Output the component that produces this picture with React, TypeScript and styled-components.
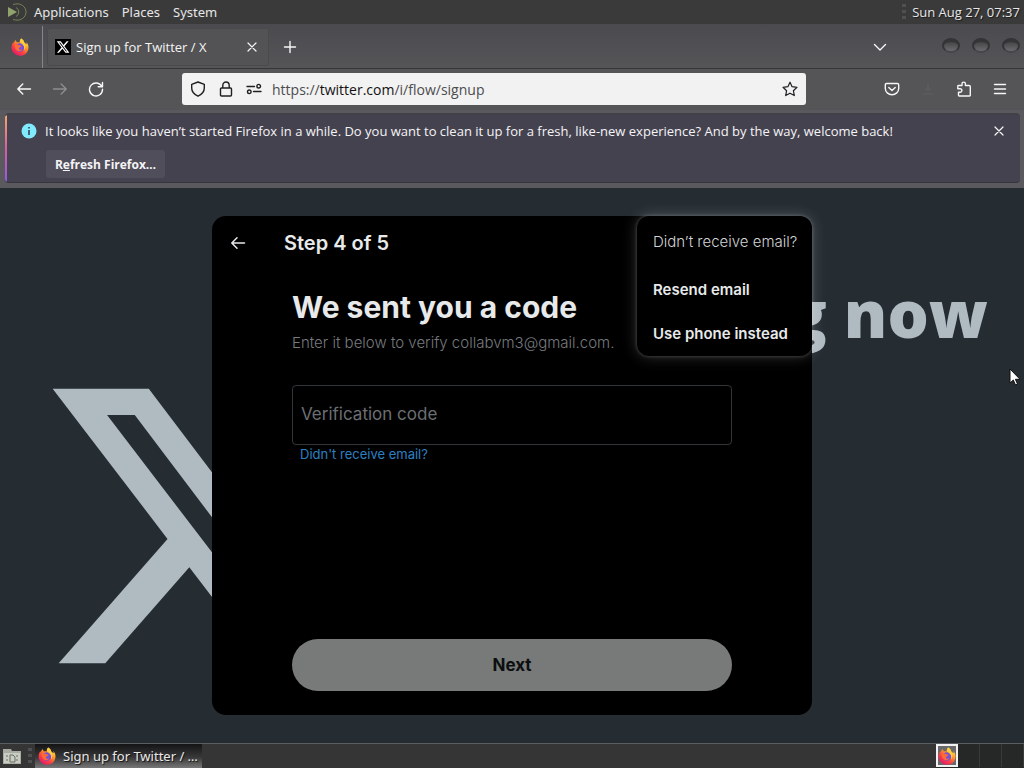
import React from "react";
import styled, { createGlobalStyle, css } from "styled-components";

const UI_FONT = '"Open Sans", "Noto Sans", sans-serif';
const PANEL_FONT = '"Noto Sans", "Open Sans", sans-serif';
const SITE_FONT = 'Inter, "Liberation Sans", sans-serif';

const GlobalStyle = createGlobalStyle`
  * { box-sizing: border-box; }
  body { margin: 0; font-family: ${UI_FONT}; background: #252d33; }
  button, input { font: inherit; color: inherit; margin: 0; padding: 0; border: 0; background: none; }
  h1, h2, p { margin: 0; padding: 0; }
  a { color: inherit; text-decoration: none; }
`;

const Desktop = styled.div`
  display: flex;
  flex-direction: column;
  min-height: 100vh;
  overflow: hidden;
`;

/* Desktop panel */
const TopPanel = styled.header`
  display: flex;
  align-items: center;
  height: 24px;
  padding: 0 4px 0 7px;
  background: #3a3a3b;
  color: #e6e6e6;
  font-family: ${PANEL_FONT};
  font-size: 13px;
  text-shadow: 1px 1px 1px #1b1b1b;
`;
const PanelMenu = styled.nav`
  display: flex;
  align-items: center;
  flex: 1;
  gap: 13px;
`;
const PanelButton = styled.button`
  line-height: 24px;
`;
const BrandButton = styled(PanelButton)`
  display: flex;
  gap: 7px;
  align-items: center;
`;
const Clock = styled.time`
  margin-left: 6px;
  font-family: ${UI_FONT};
`;

/* Browser chrome */
const TabStrip = styled.div`
  display: flex;
  align-items: center;
  height: 45px;
  padding: 2px 4px 0 0;
  border-bottom: 1px solid #353538;
  background: linear-gradient(#4b4b4f, #555558);
  color: #f4f4f4;
`;
const PinnedTab = styled.button`
  display: flex;
  align-items: center;
  justify-content: center;
  width: 43px;
  height: 42px;
  padding-right: 3px;
  border-right: 1px solid #85858a;
`;
const Tab = styled.div`
  display: flex;
  align-items: center;
  width: 222px;
  height: 38px;
  margin-left: 4px;
  padding: 0 8px 0 7px;
  gap: 5px;
  border-radius: 3px;
  border: 1px solid #4a4a4d;
  background: #535356;
  font-size: 13px;
`;
const TabTitle = styled.span`
  flex: 1;
  white-space: nowrap;
`;
const IconButton = styled.button<{ $w?: number; $dim?: boolean }>`
  display: flex;
  align-items: center;
  justify-content: center;
  width: ${(p) => p.$w ?? 36}px;
  height: 32px;
  flex: none;
  color: #f6f6f6;
  opacity: ${(p) => (p.$dim ? 0.35 : 1)};
`;
const Spacer = styled.div`
  flex: 1;
`;
const WindowButtons = styled.div`
  display: flex;
  gap: 12px;
  margin-left: 44px;
`;
const WindowButton = styled.button`
  width: 18px;
  height: 15px;
  flex: none;
  margin-bottom: 3px;
  border-radius: 50%;
  border: 2px solid #343437;
  border-top: 4px solid #343437;
  border-bottom-color: #47474a;
  background: linear-gradient(#444447, #6c6c6f);
`;
const Toolbar = styled.div`
  display: grid;
  grid-template-columns: 182px 1fr 218px;
  align-items: center;
  height: 41px;
  padding-bottom: 1px;
  background: #555557;
`;
const ToolGroup = styled.div<{ $end?: boolean }>`
  display: flex;
  padding: ${(p) => (p.$end ? "0 6px 0 0" : "0 0 0 6px")};
  justify-content: ${(p) => (p.$end ? "flex-end" : "flex-start")};
`;
const UrlBar = styled.div`
  display: flex;
  align-items: center;
  height: 32px;
  padding: 0 8px;
  border-radius: 3px;
  background: #f2f2f2;
  color: #202023;
  font-size: 14px;
`;
const UrlIcons = styled.div`
  display: flex;
  gap: 12px;
  margin-right: 10px;
`;
const Address = styled.a`
  flex: 1;
  color: #4c4c4f;
  strong { font-weight: 400; color: #111; }
`;

const NoticeWrap = styled.div`
  padding: 3px 4px 5px 5px;
  background: #5a5a5e;
`;
const Notice = styled.section`
  display: grid;
  grid-template-columns: 2px 1fr;
  min-height: 70px;
  border-radius: 4px;
  overflow: hidden;
  background: #45424f;
  border-top: 2px solid #424147;
  border-bottom: 1px solid #36343d;
  color: #f4f4f6;
  font-size: 13px;
`;
const NoticeStripe = styled.div`
  background: linear-gradient(#f5a56b, #d85fa0 50%, #9059e8);
`;
const NoticeContent = styled.div`
  padding: 0 4px 3px 14px;
`;
const NoticeLine = styled.div`
  display: flex;
  align-items: center;
  gap: 8px;
  height: 32px;
  white-space: nowrap;
`;
const NoticeText = styled.p`
  flex: 1;
  line-height: 20px;
`;
const NoticeButton = styled.button`
  height: 28px;
  width: 119px;
  margin: 3px 0 0 25px;
  border-radius: 3px;
  background: #504e5a;
  font-size: 12px;
  font-weight: 700;
`;

/* Site */
const Page = styled.main`
  position: relative;
  display: grid;
  flex: 1;
  min-height: 555px;
  background: #252d33;
  font-family: ${SITE_FONT};
  overflow: hidden;
`;
const Hero = styled.div`
  display: grid;
  grid-template-columns: 408px 1fr;
  color: #b0bac1;
`;
const HeroLogo = styled.div`
  padding: 169px 0 0 35px;
`;
const HeroTitle = styled.h1`
  display: flex;
  justify-content: flex-end;
  padding: 80px 36px 0 0;
  font-family: ${UI_FONT};
  font-size: 65px;
  line-height: 90px;
  font-weight: 800;
  white-space: nowrap;
`;
const Overlay = styled.div`
  position: absolute;
  inset: 0;
  display: flex;
  justify-content: center;
  padding: 28px 16px;
`;
const Dialog = styled.section`
  position: relative;
  display: flex;
  flex-direction: column;
  width: 100%;
  max-width: 600px;
  border-radius: 14px;
  background: #000;
  color: #e7e9ea;
`;
const DialogHeader = styled.div`
  display: flex;
  align-items: center;
  height: 53px;
  padding: 0 16px;
  gap: 36px;
`;
const BackButton = styled.button`
  display: flex;
  align-items: center;
  justify-content: center;
  width: 20px;
  height: 36px;
`;
const StepTitle = styled.h2`
  font-size: 20px;
  line-height: 24px;
  font-weight: 600;
`;
const Form = styled.form`
  display: flex;
  flex: 1;
  flex-direction: column;
  padding: 20px 80px 24px;
`;
const Heading = styled.h2`
  font-size: 30px;
  line-height: 36px;
  font-weight: 700;
`;
const Hint = styled.p`
  margin-top: 8px;
  color: #777b7f;
  font-size: 15px;
  line-height: 20px;
  font-weight: 300;
`;
const CodeInput = styled.input`
  width: 100%;
  height: 60px;
  margin-top: 32px;
  padding: 0 8px 2px;
  border: 1px solid #333639;
  border-radius: 4px;
  font-size: 17px;
  &::placeholder { color: #6b6f73; opacity: 1; }
`;
const ResendLink = styled.a`
  align-self: flex-start;
  margin-left: 8px;
  color: #2b80c4;
  font-size: 13px;
  line-height: 19px;
`;
const NextButton = styled.button`
  height: 52px;
  margin-top: auto;
  border-radius: 26px;
  background: #787a79;
  color: #0c0f10;
  font-size: 17px;
  font-weight: 700;
`;
const Menu = styled.div`
  position: absolute;
  top: 0;
  right: 0;
  width: 175px;
  height: 140px;
  padding: 4px 0;
  border-radius: 12px;
  background: #000;
  box-shadow: 0 0 15px rgba(255, 255, 255, 0.2), 0 0 3px 1px rgba(255, 255, 255, 0.15);
  font-size: 15px;
  line-height: 20px;
  white-space: nowrap;
`;
const menuLine = css`
  display: block;
  padding: 12px 16px;
  text-align: left;
`;
const MenuLabel = styled.p`
  ${menuLine}
  height: 48px;
  color: #d2d4d5;
  font-weight: 300;
`;
const MenuItem = styled.button`
  ${menuLine}
  width: 100%;
  font-weight: 600;
`;
const Pointer = styled.svg`
  position: absolute;
  top: 180px;
  right: 3px;
`;

/* Bottom panel */
const BottomPanel = styled.footer`
  display: flex;
  align-items: center;
  height: 25px;
  padding-left: 2px;
  border-top: 1px solid #5a5e60;
  background: #353535;
  color: #e8e8e8;
  font-family: ${PANEL_FONT};
  font-size: 13px;
`;
const TaskButton = styled.button`
  display: flex;
  align-items: center;
  gap: 7px;
  width: 167px;
  height: 24px;
  margin-left: 3px;
  padding: 0 3px;
  background: linear-gradient(#141415, #38383a 55%, #777);
  text-shadow: 1px 1px 1px #111;
  white-space: nowrap;
`;
const PanelIcon = styled.button`
  display: flex;
  margin-right: 6px;
`;
const Workspaces = styled.div`
  display: grid;
  grid-template-columns: repeat(4, 22px);
  height: 24px;
  background: #262727;
`;
const Workspace = styled.button<{ $active?: boolean }>`
  display: flex;
  align-items: center;
  justify-content: center;
  height: 23px;
  border-right: 1px solid #393a3a;
  ${(p) =>
    p.$active &&
    css`
      border: 2px solid #f2f2f2;
      background: #69696c;
    `}
`;

type IconProps = { size?: number };

const Firefox = ({ size = 16 }: IconProps) => (
  <svg width={size} height={size} viewBox="0 0 32 32" aria-hidden="true">
    <defs>
      <linearGradient id="foxBody" x1="0.85" y1="0.05" x2="0.2" y2="0.95">
        <stop offset="0" stopColor="#fff04a" />
        <stop offset="0.35" stopColor="#ff9a2b" />
        <stop offset="0.65" stopColor="#fb453f" />
        <stop offset="1" stopColor="#e3166f" />
      </linearGradient>
    </defs>
    <path
      d="M18 1c4 2 5 5 5.500 7 3 2 4 4 4.500 2-.3-1.500-.8-2.500-1.200-3C30 9 31.500 14 31 18c-.8 8-7 13.500-15 13.500S1 25 1 17.500C1 13 2.500 10 4.200 7.200 4 8 4.100 9 4.300 9.500 6 7 7 5 7.500 3.500 9 5 10 6.500 10.500 8c2-.5 4-.3 5 .5C15 5 16.500 3 18 1z"
      fill="url(#foxBody)"
    />
    <circle cx="16" cy="17" r="7.500" fill="#7651d8" />
    <path d="M6 13c2-2 6-2 9 0 2 .5 4 0 3.500 1.500-1 2-3.500 1.500-4.500 3.500-.5 2 2 4 6 2-2 5-10 4.500-12-1C7 17 6.500 15 6 13z" fill="#ff6c34" />
    <path d="M18 1c4 2 5 5 5.500 7 3 4 3.500 10-.5 14 2-6-1-10-5-12.500C15.500 7 16 3.500 18 1z" fill="#ffce3c" />
  </svg>
);

const X_PATH =
  "M18.244 2.25h3.308l-7.227 8.26 8.502 11.24H16.17l-5.214-6.817L4.99 21.75H1.68l7.73-8.835L1.254 2.25H8.08l4.713 6.231zm-1.161 17.52h1.833L7.084 4.126H5.117z";

const XLogo = ({ size = 16 }: IconProps) => (
  <svg width={size} height={size} viewBox="0 0 24 24" fill="currentColor" aria-hidden="true">
    <path d={X_PATH} />
  </svg>
);
const XFavicon = () => (
  <svg width="16" height="16" viewBox="0 0 24 24" aria-hidden="true">
    <path d="M0 0h24v24H0z" fill="#000" />
    <path d={X_PATH} fill="#fff" transform="translate(1.500 1.500) scale(.88)" />
  </svg>
);

const Line = ({ d, size = 16, w = 1.4 }: { d: string; size?: number; w?: number }) => (
  <svg
    width={size}
    height={size}
    viewBox="0 0 16 16"
    fill="none"
    stroke="currentColor"
    strokeWidth={w}
    strokeLinecap="round"
    strokeLinejoin="round"
    aria-hidden="true"
  >
    <path d={d} />
  </svg>
);

const CLOSE = "M4 4l8 8M12 4l-8 8";
const BACK = "M14.500 8H1.800M6.800 3L1.800 8l5 5";
const FORWARD = "M1.500 8h12.700M9.200 3l5 5-5 5";
const RELOAD = "M13.800 5.500A6.500 6.500 0 1 0 14.500 8.300M14.500 1.500v4.300h-4.300";
const SHIELD = "M8 1L14.300 3.300V7c0 4-2.600 6.500-6.300 8.200C4.300 13.500 1.700 11 1.700 7V3.300z";
const LOCK = "M3.500 7h9c.6 0 1 .4 1 1v6c0 .6-.4 1-1 1h-9c-.6 0-1-.4-1-1V8c0-.6.4-1 1-1zM4.800 7V4.200a3.200 3.200 0 0 1 6.400 0V7";
const SLIDERS = "M1 5.500h7.500M14.500 5.200a1.800 1.800 0 1 0-3.600 0 1.800 1.800 0 0 0 3.600 0M7.500 10.500H15M1.500 10.800a1.800 1.800 0 1 0 3.600 0 1.800 1.800 0 0 0-3.600 0";
const STAR = "M8 1.200l2.100 4.500 4.900.6-3.600 3.400.9 4.900L8 12.200l-4.300 2.400.9-4.900L1 6.300l4.900-.6z";
const POCKET = "M2.500 2.500h11c.7 0 1.200.5 1.200 1.200V7.500a6.700 6.200 0 0 1-13.400 0V3.700c0-.7.500-1.200 1.200-1.200zM4.800 6.500L8 9.600l3.200-3.100";
const PUZZLE = "M2.500 4.500H6V2.800a1.700 1.700 0 0 1 3.400 0v1.700h3.700c.7 0 1.200.5 1.200 1.200v8.600c0 .4-.3.700-.7.700H3.200c-.4 0-.7-.3-.7-.7v-3.100h1.700a1.700 1.700 0 0 0 0-3.400H1.800V5.200c0-.4.3-.7.7-.7z";
const DOWNLOAD = "M8 2v7M5.500 7L8 9.500 10.500 7M3 13h10";

const Grip = () => (
  <svg width="4" height="16" viewBox="0 0 4 16" fill="#505052" aria-hidden="true">
    <path d="M0 0h4v3H0zM0 6h4v3H0zM0 12h4v3H0z" />
  </svg>
);

export default function App() {
  return (
    <Desktop>
      <GlobalStyle />
      <TopPanel>
        <PanelMenu aria-label="Desktop">
          <BrandButton>
            <svg width="20" height="18" viewBox="0 0 20 18" fill="none" aria-hidden="true">
              <path d="M1 4l9 5-9 5z" fill="#91a36c" />
              <path d="M6 1.500C14-1 19 4 19 9s-5 10-13 7.500" stroke="#748456" />
              <path d="M9 4.500a5 5 0 0 1 0 9" stroke="#748456" />
            </svg>
            Applications
          </BrandButton>
          <PanelButton>Places</PanelButton>
          <PanelButton>System</PanelButton>
        </PanelMenu>
        <Grip />
        <Clock>Sun Aug 27, 07:37</Clock>
      </TopPanel>

      <TabStrip>
        <PinnedTab aria-label="Firefox View">
          <Firefox size={18} />
        </PinnedTab>
        <Tab>
          <XFavicon />
          <TabTitle>Sign up for Twitter / X</TabTitle>
          <IconButton $w={16} aria-label="Close tab">
            <Line d={CLOSE} w={1.2} />
          </IconButton>
        </Tab>
        <IconButton $w={42} aria-label="New tab">
          <Line d="M8 2.500v11M2.500 8h11" />
        </IconButton>
        <Spacer />
        <IconButton $w={36} aria-label="List all tabs">
          <Line d="M2.500 5.500L8 11l5.500-5.500" />
        </IconButton>
        <WindowButtons>
          <WindowButton aria-label="Minimize" />
          <WindowButton aria-label="Maximize" />
          <WindowButton aria-label="Close" />
        </WindowButtons>
      </TabStrip>

      <Toolbar>
        <ToolGroup>
          <IconButton aria-label="Back"><Line d={BACK} /></IconButton>
          <IconButton $dim aria-label="Forward"><Line d={FORWARD} /></IconButton>
          <IconButton aria-label="Reload"><Line d={RELOAD} /></IconButton>
        </ToolGroup>
        <UrlBar>
          <UrlIcons>
            <Line d={SHIELD} />
            <Line d={LOCK} />
            <Line d={SLIDERS} />
          </UrlIcons>
          <Address href="#">
            https://<strong>twitter.com</strong>/i/flow/signup
          </Address>
          <Line d={STAR} w={1.2} />
        </UrlBar>
        <ToolGroup $end>
          <IconButton aria-label="Save to Pocket"><Line d={POCKET} /></IconButton>
          <IconButton $dim aria-label="Downloads">
            <svg width="16" height="16" viewBox="0 0 16 16" fill="none" stroke="#77777a" aria-hidden="true">
              <path d={DOWNLOAD} />
            </svg>
          </IconButton>
          <IconButton aria-label="Extensions"><Line d={PUZZLE} /></IconButton>
          <IconButton aria-label="Menu"><Line d="M2.500 3.500h11M2.500 8h11M2.500 12.500h11" /></IconButton>
        </ToolGroup>
      </Toolbar>

      <NoticeWrap>
        <Notice>
          <NoticeStripe />
          <NoticeContent>
            <NoticeLine>
              <svg width="16" height="16" viewBox="0 0 16 16" aria-hidden="true">
                <circle cx="8" cy="8" r="7.500" fill="#80ebff" />
                <path d="M8 7v5M8 4v1.500" stroke="#34434f" strokeWidth="1.600" />
              </svg>
              <NoticeText>
                It looks like you haven’t started Firefox in a while. Do you want to clean it up for a
                fresh, like-new experience? And by the way, welcome back!
              </NoticeText>
              <IconButton $w={34} aria-label="Dismiss">
                <Line d={CLOSE} w={1.2} />
              </IconButton>
            </NoticeLine>
            <NoticeButton>
              R<u>e</u>fresh Firefox…
            </NoticeButton>
          </NoticeContent>
        </Notice>
      </NoticeWrap>

      <Page>
        <Hero>
          <HeroLogo><XLogo size={338} /></HeroLogo>
          <HeroTitle>Happening now</HeroTitle>
        </Hero>
        <Overlay>
          <Dialog role="dialog" aria-labelledby="step-title">
            <DialogHeader>
              <BackButton aria-label="Back">
                <Line d="M14.500 8H2M7 2.800L1.800 8 7 13.200" w={1.5} />
              </BackButton>
              <StepTitle id="step-title">Step 4 of 5</StepTitle>
            </DialogHeader>
            <Form onSubmit={(e) => e.preventDefault()}>
              <Heading>We sent you a code</Heading>
              <Hint>Enter it below to verify collabvm3@gmail.com.</Hint>
              <CodeInput aria-label="Verification code" placeholder="Verification code" />
              <ResendLink href="#">Didn't receive email?</ResendLink>
              <NextButton type="submit">Next</NextButton>
            </Form>
            <Menu>
              <MenuLabel>Didn’t receive email?</MenuLabel>
              <MenuItem>Resend email</MenuItem>
              <MenuItem>Use phone instead</MenuItem>
            </Menu>
          </Dialog>
        </Overlay>
        <Pointer width="12" height="18" viewBox="0 0 12 18" aria-hidden="true">
          <path d="M1 1v14l3.300-3 2.200 5 2-1-2.100-4.700H11z" fill="#fff" stroke="#111" />
        </Pointer>
      </Page>

      <BottomPanel>
        <PanelIcon aria-label="Show desktop">
          <svg width="20" height="18" viewBox="0 0 20 18" aria-hidden="true">
            <path d="M1 2h8l1 2h9v13H1z" fill="#a9aca2" />
            <path d="M2 6h16v10H2z" fill="#c9ccc0" />
            <path d="M8 8h3l2 2v5H8zM4 9h2M14 9h2M4 13h2M14 13h2" fill="none" stroke="#696c64" />
          </svg>
        </PanelIcon>
        <Grip />
        <TaskButton>
          <Firefox size={18} />
          Sign up for Twitter / …
        </TaskButton>
        <Spacer />
        <Workspaces>
          <Workspace $active aria-label="Workspace 1"><Firefox size={18} /></Workspace>
          <Workspace aria-label="Workspace 2" />
          <Workspace aria-label="Workspace 3" />
          <Workspace aria-label="Workspace 4" />
        </Workspaces>
      </BottomPanel>
    </Desktop>
  );
}
